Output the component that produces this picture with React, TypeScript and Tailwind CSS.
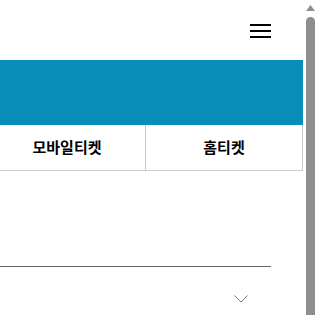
import React from "react";

export default function App() {
  return (
    <div
      className="h-[315px] w-[318px] overflow-hidden bg-white flex"
      style={{ fontFamily: '"Noto Sans CJK KR", "Noto Sans", sans-serif' }}
    >
      <main className="w-[303px] shrink-0">
        <header className="h-[60px] flex items-center justify-end pr-[32px]">
          <button className="w-[21px] h-[14px] flex flex-col justify-between mt-[1px]" aria-label="menu">
            <span className="block h-[2px] w-full bg-black" />
            <span className="block h-[2px] w-full bg-black" />
            <span className="block h-[2px] w-full bg-black" />
          </button>
        </header>
        <div className="h-[65px] bg-[#088eb8]" />
        <div className="grid grid-cols-[146px_1fr] h-[46px] border-b border-r border-[#cccccc] text-[15px] font-bold text-black">
          <div className="flex items-center justify-center pr-[11px] border-r border-[#cccccc]">모바일티켓</div>
          <div className="flex items-center justify-center">홈티켓</div>
        </div>
        <div className="h-[95px]" />
        <div className="mr-[32px] h-px bg-[#666666]" />
        <div className="flex justify-end pr-[55px] pt-[28px]">
          <svg width="14" height="8" viewBox="0 0 14 8" fill="none">
            <path d="M0.5 0.5 L7 7 L13.5 0.5" stroke="#777" strokeWidth="1" />
          </svg>
        </div>
      </main>
      <aside className="w-[15px] shrink-0 flex flex-col items-center pt-[5px] bg-white">
        <svg width="9" height="6" viewBox="0 0 9 6">
          <path d="M4.5 0 L9 6 L0 6 Z" fill="#8e8e8e" />
        </svg>
        <div className="mt-[6px] w-[9px] flex-1 rounded-t-[5px] bg-[#8e8e8e]" />
      </aside>
    </div>
  );
}
